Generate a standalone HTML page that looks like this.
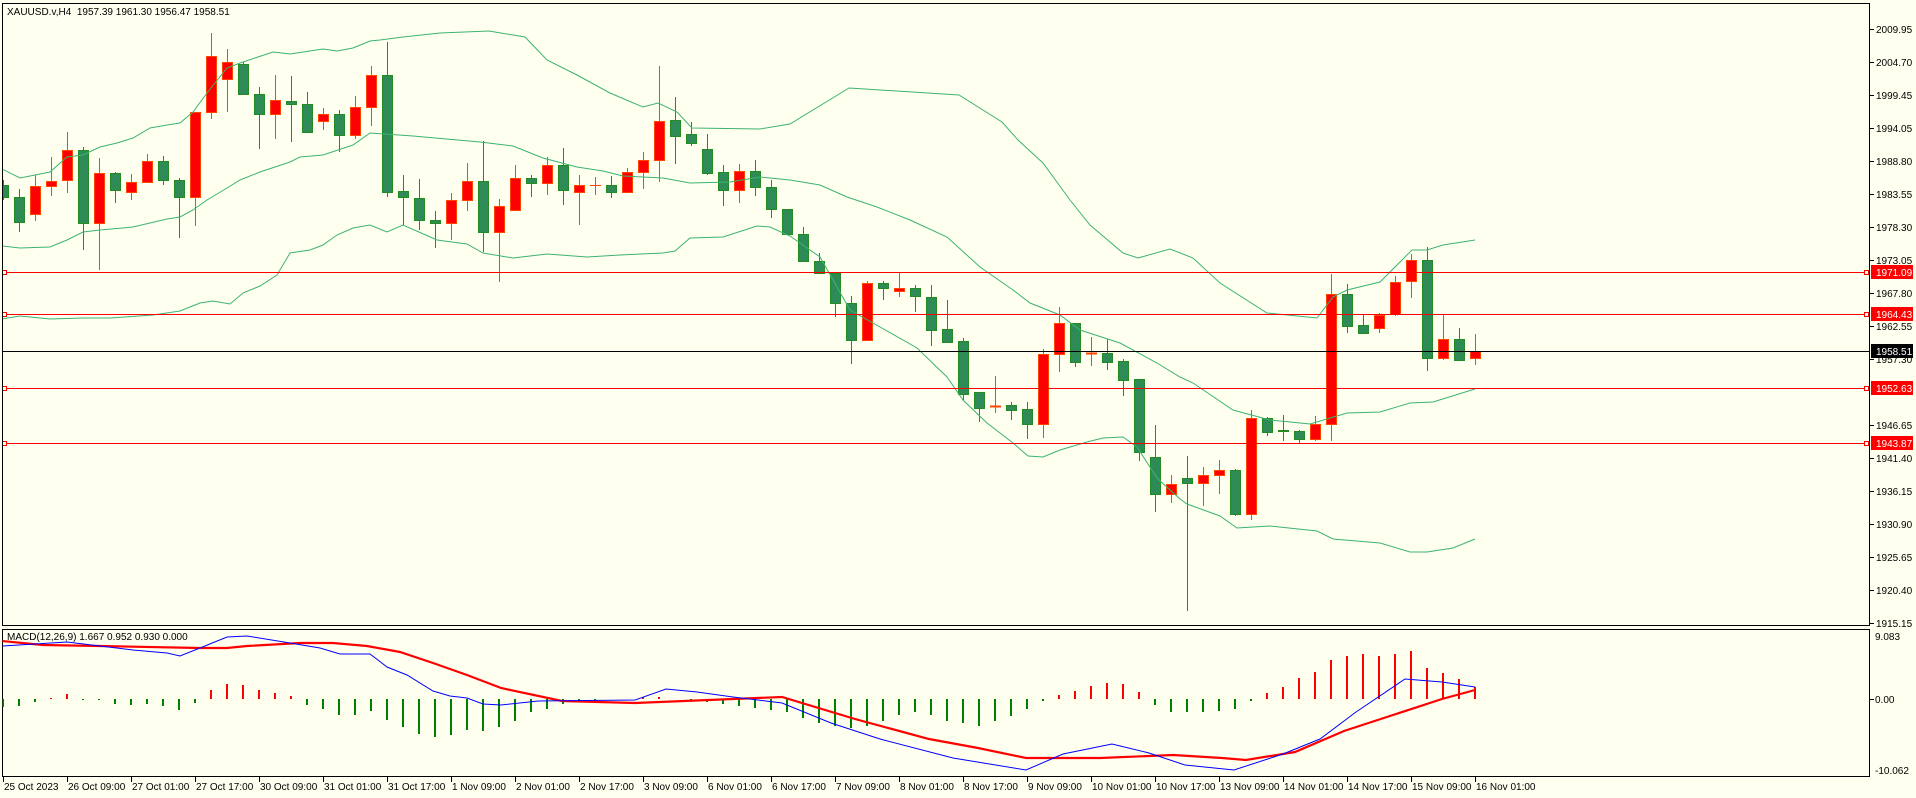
<!DOCTYPE html>
<html><head><meta charset="utf-8"><style>
html,body{margin:0;padding:0;background:#FFFFF0;}
svg{display:block;}
text{font-family:"Liberation Sans","DejaVu Sans",sans-serif;font-size:10px;fill:#000;}
.gw{stroke:#228B22;stroke-width:1;fill:none}
.rw{stroke:#FF4500;stroke-width:1;fill:none}
.G{fill:#2E8B57;stroke:#228B22;stroke-width:1}
.R{fill:#FF0000;stroke:#FF4500;stroke-width:1}
.bb{fill:none;stroke:#3CB371;stroke-width:1}
.hl{stroke:#FF0000;stroke-width:1.3}
.tag text{fill:#fff}
</style></head><body>
<svg width="1916" height="798" viewBox="0 0 1916 798" xmlns="http://www.w3.org/2000/svg">
<defs>
<clipPath id="cm"><rect x="2.5" y="3.5" width="1867" height="622"/></clipPath>
<clipPath id="cd"><rect x="2.5" y="629.5" width="1867" height="147"/></clipPath>
</defs>
<rect width="1916" height="798" fill="#FFFFF0"/>
<g clip-path="url(#cm)" shape-rendering="crispEdges">
<path class="gw" d="M3.5 180V200M19.5 189V232M83.5 147V250M115.5 172V203M163.5 156V185M179.5 178V238M243.5 62V94M259.5 87V149M291.5 76V142M307.5 92V132M339.5 110V152M387.5 42V197M403.5 175V225M419.5 179V230M435.5 211V248M483.5 141V252M531.5 175V197M563.5 148V205M611.5 176V198M675.5 97V164M691.5 122V146M707.5 134V175M723.5 165V206M755.5 160V196M771.5 180V218M787.5 209V235M803.5 227V261M819.5 253V273M835.5 273V317M851.5 296V364M883.5 281V300M915.5 285V312M931.5 285V346M947.5 300V343M963.5 338V400M979.5 392V422M1011.5 402V420M1027.5 402V439M1075.5 323V367M1107.5 339V370M1123.5 359V396M1139.5 379V461M1155.5 425V512M1187.5 456V611M1235.5 469V516M1267.5 417V436M1283.5 415V441M1299.5 430V444M1347.5 284V333M1363.5 315V333M1427.5 247V371M1459.5 328V360"/>
<path class="rw" d="M35.5 175V221M51.5 157V196M67.5 132V193M99.5 158V270M131.5 174V200M147.5 154V182M195.5 112V226M211.5 33V119M227.5 49V112M275.5 75V139M323.5 108V130M355.5 96V139M371.5 66V126M451.5 193V240M467.5 163V211M499.5 199V282M515.5 165V210M547.5 157V195M579.5 175V225M595.5 177V195M627.5 168V193M643.5 152V189M659.5 66V182M739.5 164V203M867.5 281V341M899.5 272V297M995.5 376V413M1043.5 349V438M1059.5 307V372M1091.5 337V366M1171.5 475V503M1203.5 467V506M1219.5 460V494M1251.5 410V520M1315.5 416V441M1331.5 274V441M1379.5 313V333M1395.5 276V316M1411.5 254V298M1443.5 314V360M1475.5 334V365"/>
<g class="G">
<rect x="-1.5" y="185.5" width="10" height="12"/>
<rect x="14.5" y="197.5" width="10" height="25"/>
<rect x="78.5" y="150.5" width="10" height="73"/>
<rect x="110.5" y="173.5" width="10" height="17"/>
<rect x="158.5" y="161.5" width="10" height="19"/>
<rect x="174.5" y="180.5" width="10" height="17"/>
<rect x="238.5" y="64.5" width="10" height="30"/>
<rect x="254.5" y="94.5" width="10" height="20"/>
<rect x="286.5" y="101.5" width="10" height="3"/>
<rect x="302.5" y="104.5" width="10" height="28"/>
<rect x="334.5" y="114.5" width="10" height="21"/>
<rect x="382.5" y="75.5" width="10" height="117"/>
<rect x="398.5" y="191.5" width="10" height="6"/>
<rect x="414.5" y="198.5" width="10" height="22"/>
<rect x="430.5" y="220.5" width="10" height="3"/>
<rect x="478.5" y="181.5" width="10" height="51"/>
<rect x="526.5" y="178.5" width="10" height="5"/>
<rect x="558.5" y="165.5" width="10" height="25"/>
<rect x="606.5" y="185.5" width="10" height="7"/>
<rect x="670.5" y="120.5" width="10" height="16"/>
<rect x="686.5" y="134.5" width="10" height="9"/>
<rect x="702.5" y="149.5" width="10" height="24"/>
<rect x="718.5" y="172.5" width="10" height="18"/>
<rect x="750.5" y="171.5" width="10" height="16"/>
<rect x="766.5" y="187.5" width="10" height="22"/>
<rect x="782.5" y="209.5" width="10" height="25"/>
<rect x="798.5" y="234.5" width="10" height="27"/>
<rect x="814.5" y="261.5" width="10" height="12"/>
<rect x="830.5" y="273.5" width="10" height="30"/>
<rect x="846.5" y="303.5" width="10" height="37"/>
<rect x="878.5" y="283.5" width="10" height="5"/>
<rect x="910.5" y="288.5" width="10" height="8"/>
<rect x="926.5" y="297.5" width="10" height="33"/>
<rect x="942.5" y="329.5" width="10" height="13"/>
<rect x="958.5" y="341.5" width="10" height="53"/>
<rect x="974.5" y="392.5" width="10" height="16"/>
<rect x="1006.5" y="405.5" width="10" height="5"/>
<rect x="1022.5" y="409.5" width="10" height="15"/>
<rect x="1070.5" y="323.5" width="10" height="39"/>
<rect x="1102.5" y="353.5" width="10" height="9"/>
<rect x="1118.5" y="361.5" width="10" height="19"/>
<rect x="1134.5" y="379.5" width="10" height="73"/>
<rect x="1150.5" y="457.5" width="10" height="37"/>
<rect x="1182.5" y="478.5" width="10" height="5"/>
<rect x="1230.5" y="470.5" width="10" height="44"/>
<rect x="1262.5" y="418.5" width="10" height="14"/>
<rect x="1278.5" y="430.5" width="10" height="1"/>
<rect x="1294.5" y="431.5" width="10" height="8"/>
<rect x="1342.5" y="294.5" width="10" height="32"/>
<rect x="1358.5" y="325.5" width="10" height="8"/>
<rect x="1422.5" y="260.5" width="10" height="98"/>
<rect x="1454.5" y="339.5" width="10" height="21"/>
</g>
<g class="R">
<rect x="30.5" y="186.5" width="10" height="28"/>
<rect x="46.5" y="181.5" width="10" height="5"/>
<rect x="62.5" y="150.5" width="10" height="30"/>
<rect x="94.5" y="173.5" width="10" height="50"/>
<rect x="126.5" y="182.5" width="10" height="10"/>
<rect x="142.5" y="161.5" width="10" height="21"/>
<rect x="190.5" y="112.5" width="10" height="85"/>
<rect x="206.5" y="56.5" width="10" height="56"/>
<rect x="222.5" y="62.5" width="10" height="17"/>
<rect x="270.5" y="100.5" width="10" height="14"/>
<rect x="318.5" y="114.5" width="10" height="7"/>
<rect x="350.5" y="107.5" width="10" height="28"/>
<rect x="366.5" y="75.5" width="10" height="32"/>
<rect x="446.5" y="200.5" width="10" height="23"/>
<rect x="462.5" y="181.5" width="10" height="19"/>
<rect x="494.5" y="206.5" width="10" height="26"/>
<rect x="510.5" y="178.5" width="10" height="32"/>
<rect x="542.5" y="165.5" width="10" height="18"/>
<rect x="574.5" y="185.5" width="10" height="7"/>
<rect x="622.5" y="172.5" width="10" height="20"/>
<rect x="638.5" y="160.5" width="10" height="12"/>
<rect x="654.5" y="121.5" width="10" height="39"/>
<rect x="734.5" y="171.5" width="10" height="19"/>
<rect x="862.5" y="283.5" width="10" height="57"/>
<rect x="894.5" y="288.5" width="10" height="3"/>
<rect x="990.5" y="406" width="10" height="1"/>
<rect x="1038.5" y="354.5" width="10" height="70"/>
<rect x="1054.5" y="323.5" width="10" height="31"/>
<rect x="1086.5" y="353" width="10" height="1"/>
<rect x="1166.5" y="484.5" width="10" height="10"/>
<rect x="1198.5" y="475.5" width="10" height="8"/>
<rect x="1214.5" y="470.5" width="10" height="5"/>
<rect x="1246.5" y="418.5" width="10" height="96"/>
<rect x="1310.5" y="424.5" width="10" height="15"/>
<rect x="1326.5" y="294.5" width="10" height="130"/>
<rect x="1374.5" y="315.5" width="10" height="13"/>
<rect x="1390.5" y="282.5" width="10" height="32"/>
<rect x="1406.5" y="260.5" width="10" height="21"/>
<rect x="1438.5" y="339.5" width="10" height="19"/>
<rect x="1470.5" y="351.5" width="10" height="7"/>
</g>
<path class="rw" d="M590 185.5H601"/>
</g>
<g clip-path="url(#cm)">
<polyline class="bb" points="2,169 20,178 50,172 67,157 83,155 100,147 117,143 133,138 150,128 167,125 180,123 193,112 207,93 227,68 240,63 273,52 290,54 323,49 337,51 353,48 370,41 380,40 403,37 440,33 489,31 525,37 547,60 577,75 610,93 643,107 658,103 677,112 692,128 760,129 790,124 849,88 959,95 1002,122 1018,140 1043,163 1070,200 1090,225 1123,253 1138,258 1170,249 1193,258 1220,283 1267,313 1317,318 1333,297 1347,290 1380,282 1412,250 1427,250 1443,245 1475,240"/>
<polyline class="bb" points="2,246 20,248 50,247 67,240 83,232 100,230 133,227 167,219 180,217 193,210 207,200 227,188 240,180 260,172 290,162 300,157 323,155 353,145 370,133 413,136 480,142 513,146 543,158 577,167 603,171 623,176 663,178 690,183 730,182 760,177 790,180 820,185 847,197 877,207 910,220 947,237 980,267 1013,290 1030,303 1060,315 1080,330 1120,343 1157,363 1180,377 1193,383 1233,410 1270,420 1310,424 1347,413 1380,412 1410,403 1433,402 1475,389"/>
<polyline class="bb" points="2,319 20,316 50,319 83,318 110,318 153,315 180,311 200,303 213,301 230,304 243,293 260,286 277,275 290,253 310,250 323,245 337,235 353,228 370,225 387,232 403,225 437,240 467,244 483,253 513,258 547,254 587,257 620,255 663,253 675,251 690,238 723,237 757,226 770,227 790,236 820,257 850,310 880,327 917,348 947,377 963,400 987,423 1013,443 1028,456 1043,457 1060,450 1087,442 1103,438 1123,437 1137,447 1157,478 1180,499 1187,504 1220,516 1237,528 1270,526 1317,531 1333,539 1380,543 1410,552 1427,552 1453,548 1475,539"/>
</g>
<g shape-rendering="crispEdges">
<line class="hl" x1="2" y1="272.5" x2="1870" y2="272.5"/>
<line class="hl" x1="2" y1="314.5" x2="1870" y2="314.5"/>
<line x1="2" y1="351.5" x2="1870" y2="351.5" stroke="#000" stroke-width="1.3"/>
<line class="hl" x1="2" y1="388.5" x2="1870" y2="388.5"/>
<line class="hl" x1="2" y1="443.5" x2="1870" y2="443.5"/>
<g fill="#FFFFF0" stroke="#FF0000" stroke-width="1">
<rect x="2.5" y="270.5" width="4" height="4"/><rect x="2.5" y="312.5" width="4" height="4"/><rect x="2.5" y="386.5" width="4" height="4"/><rect x="2.5" y="441.5" width="4" height="4"/>
<rect x="1864.5" y="270.5" width="4" height="4"/><rect x="1864.5" y="312.5" width="4" height="4"/><rect x="1864.5" y="386.5" width="4" height="4"/><rect x="1864.5" y="441.5" width="4" height="4"/>
</g>
<rect x="2.5" y="3.5" width="1867" height="622" fill="none" stroke="#000"/>
<rect x="2.5" y="629.5" width="1867" height="147" fill="none" stroke="#000"/>
<path stroke="#000" d="M1870 29.5h4M1870 62.5h4M1870 95.5h4M1870 128.5h4M1870 161.5h4M1870 194.5h4M1870 227.5h4M1870 260.5h4M1870 293.5h4M1870 326.5h4M1870 359.5h4M1870 425.5h4M1870 458.5h4M1870 491.5h4M1870 524.5h4M1870 557.5h4M1870 590.5h4M1870 623.5h4M1870 699.5h4"/>
<path stroke="#000" d="M3.5 777v5M67.5 777v5M131.5 777v5M195.5 777v5M259.5 777v5M323.5 777v5M387.5 777v5M451.5 777v5M515.5 777v5M579.5 777v5M643.5 777v5M707.5 777v5M771.5 777v5M835.5 777v5M899.5 777v5M963.5 777v5M1027.5 777v5M1091.5 777v5M1155.5 777v5M1219.5 777v5M1283.5 777v5M1347.5 777v5M1411.5 777v5M1475.5 777v5"/>
</g>
<g>
<text x="1876" y="33">2009.95</text><text x="1876" y="66">2004.70</text><text x="1876" y="99">1999.45</text><text x="1876" y="132">1994.05</text><text x="1876" y="165">1988.80</text><text x="1876" y="198">1983.55</text><text x="1876" y="231">1978.30</text><text x="1876" y="264">1973.05</text><text x="1876" y="297">1967.80</text><text x="1876" y="330">1962.55</text><text x="1876" y="363">1957.30</text><text x="1876" y="429">1946.65</text><text x="1876" y="462">1941.40</text><text x="1876" y="495">1936.15</text><text x="1876" y="528">1930.90</text><text x="1876" y="561">1925.65</text><text x="1876" y="594">1920.40</text><text x="1876" y="627">1915.15</text>
<text x="1875" y="640">9.083</text><text x="1875" y="703">0.00</text><text x="1875" y="774">-10.062</text>
</g>
<g class="tag">
<rect x="1871" y="265" width="42" height="14" fill="#FF0000"/><text x="1876" y="276">1971.09</text>
<rect x="1871" y="307" width="42" height="14" fill="#FF0000"/><text x="1876" y="318">1964.43</text>
<rect x="1871" y="344" width="42" height="14" fill="#000"/><text x="1876" y="355">1958.51</text>
<rect x="1871" y="381" width="42" height="14" fill="#FF0000"/><text x="1876" y="392">1952.63</text>
<rect x="1871" y="436" width="42" height="14" fill="#FF0000"/><text x="1876" y="447">1943.87</text>
</g>
<text x="7" y="15" xml:space="preserve">XAUUSD.v,H4  1957.39 1961.30 1956.47 1958.51</text>
<g clip-path="url(#cd)" shape-rendering="crispEdges">
<g fill="#008000">
<rect x="2" y="699" width="2" height="8"/><rect x="18" y="699" width="2" height="7"/><rect x="34" y="699" width="2" height="3"/><rect x="82" y="699" width="2" height="1"/><rect x="98" y="699" width="2" height="1"/><rect x="114" y="699" width="2" height="5"/><rect x="130" y="699" width="2" height="6"/><rect x="146" y="699" width="2" height="5"/><rect x="162" y="699" width="2" height="7"/><rect x="178" y="699" width="2" height="11"/><rect x="194" y="699" width="2" height="4"/>
<rect x="306" y="699" width="2" height="6"/><rect x="322" y="699" width="2" height="10"/><rect x="338" y="699" width="2" height="16"/><rect x="354" y="699" width="2" height="16"/><rect x="370" y="699" width="2" height="12"/><rect x="386" y="699" width="2" height="21"/><rect x="402" y="699" width="2" height="28"/><rect x="418" y="699" width="2" height="35"/><rect x="434" y="699" width="2" height="38"/><rect x="450" y="699" width="2" height="36"/><rect x="466" y="699" width="2" height="31"/><rect x="482" y="699" width="2" height="32"/><rect x="498" y="699" width="2" height="28"/><rect x="514" y="699" width="2" height="22"/><rect x="530" y="699" width="2" height="13"/><rect x="546" y="699" width="2" height="10"/><rect x="562" y="699" width="2" height="5"/><rect x="578" y="699" width="2" height="2"/><rect x="594" y="699" width="2" height="1"/>
<rect x="690" y="699" width="2" height="1"/><rect x="706" y="699" width="2" height="3"/><rect x="722" y="699" width="2" height="5"/><rect x="738" y="699" width="2" height="7"/><rect x="754" y="699" width="2" height="9"/><rect x="770" y="699" width="2" height="11"/><rect x="786" y="699" width="2" height="13"/><rect x="802" y="699" width="2" height="19"/><rect x="818" y="699" width="2" height="24"/><rect x="834" y="699" width="2" height="27"/><rect x="850" y="699" width="2" height="29"/><rect x="866" y="699" width="2" height="27"/><rect x="882" y="699" width="2" height="22"/><rect x="898" y="699" width="2" height="16"/><rect x="914" y="699" width="2" height="13"/><rect x="930" y="699" width="2" height="16"/><rect x="946" y="699" width="2" height="22"/><rect x="962" y="699" width="2" height="24"/><rect x="978" y="699" width="2" height="27"/><rect x="994" y="699" width="2" height="22"/><rect x="1010" y="699" width="2" height="17"/><rect x="1026" y="699" width="2" height="10"/><rect x="1042" y="699" width="2" height="2"/>
<rect x="1154" y="699" width="2" height="6"/><rect x="1170" y="699" width="2" height="13"/><rect x="1186" y="699" width="2" height="13"/><rect x="1202" y="699" width="2" height="13"/><rect x="1218" y="699" width="2" height="12"/><rect x="1234" y="699" width="2" height="10"/><rect x="1250" y="699" width="2" height="2"/>
</g>
<g fill="#FF0000">
<rect x="50" y="698" width="2" height="1"/><rect x="66" y="694" width="2" height="5"/><rect x="210" y="690" width="2" height="9"/><rect x="226" y="684" width="2" height="15"/><rect x="242" y="685" width="2" height="14"/><rect x="258" y="690" width="2" height="9"/><rect x="274" y="693" width="2" height="6"/><rect x="290" y="696" width="2" height="3"/>
<rect x="642" y="697" width="2" height="2"/><rect x="658" y="697" width="2" height="2"/>
<rect x="1058" y="695" width="2" height="4"/><rect x="1074" y="691" width="2" height="8"/><rect x="1090" y="686" width="2" height="13"/><rect x="1106" y="683" width="2" height="16"/><rect x="1122" y="684" width="2" height="15"/><rect x="1138" y="692" width="2" height="7"/>
<rect x="1266" y="693" width="2" height="6"/><rect x="1282" y="687" width="2" height="12"/><rect x="1298" y="678" width="2" height="21"/><rect x="1314" y="672" width="2" height="27"/><rect x="1330" y="660" width="2" height="39"/><rect x="1346" y="656" width="2" height="43"/><rect x="1362" y="654" width="2" height="45"/><rect x="1378" y="656" width="2" height="43"/><rect x="1394" y="654" width="2" height="45"/><rect x="1410" y="651" width="2" height="48"/><rect x="1426" y="668" width="2" height="31"/><rect x="1442" y="673" width="2" height="26"/><rect x="1458" y="679" width="2" height="20"/><rect x="1474" y="687" width="2" height="12"/>
</g>
</g>
<g clip-path="url(#cd)">
<polyline fill="none" stroke="#FF0000" stroke-width="2.2" points="2,641 43,645 100,646 200,648 227,648 247,646 300,643 333,643 367,646 400,652 433,663 467,675 501,688 562,701 635,703 733,699 782,697 855,719 929,739 978,748 1026,758 1100,758 1173,755 1222,758 1246,760 1295,752 1344,731 1393,715 1442,699 1475,690"/>
<polyline fill="none" stroke="#0000FF" stroke-width="1" points="2,646 67,642 133,650 167,653 180,656 200,648 227,637 247,636 290,643 320,648 340,654 370,654 387,667 407,675 433,691 450,696 467,698 483,704 501,705 538,701 635,700 666,689 697,692 733,697 782,703 831,723 880,739 953,758 1026,770 1063,754 1112,744 1149,753 1185,765 1234,770 1283,754 1320,739 1356,712 1405,679 1442,682 1475,687"/>
</g>
<text x="7" y="640">MACD(12,26,9) 1.667 0.952 0.930 0.000</text>
<g>
<text x="4" y="790">25 Oct 2023</text><text x="68" y="790">26 Oct 09:00</text><text x="132" y="790">27 Oct 01:00</text><text x="196" y="790">27 Oct 17:00</text><text x="260" y="790">30 Oct 09:00</text><text x="324" y="790">31 Oct 01:00</text><text x="388" y="790">31 Oct 17:00</text><text x="452" y="790">1 Nov 09:00</text><text x="516" y="790">2 Nov 01:00</text><text x="580" y="790">2 Nov 17:00</text><text x="644" y="790">3 Nov 09:00</text><text x="708" y="790">6 Nov 01:00</text><text x="772" y="790">6 Nov 17:00</text><text x="836" y="790">7 Nov 09:00</text><text x="900" y="790">8 Nov 01:00</text><text x="964" y="790">8 Nov 17:00</text><text x="1028" y="790">9 Nov 09:00</text><text x="1092" y="790">10 Nov 01:00</text><text x="1156" y="790">10 Nov 17:00</text><text x="1220" y="790">13 Nov 09:00</text><text x="1284" y="790">14 Nov 01:00</text><text x="1348" y="790">14 Nov 17:00</text><text x="1412" y="790">15 Nov 09:00</text><text x="1476" y="790">16 Nov 01:00</text>
</g>
</svg>
</body></html>
